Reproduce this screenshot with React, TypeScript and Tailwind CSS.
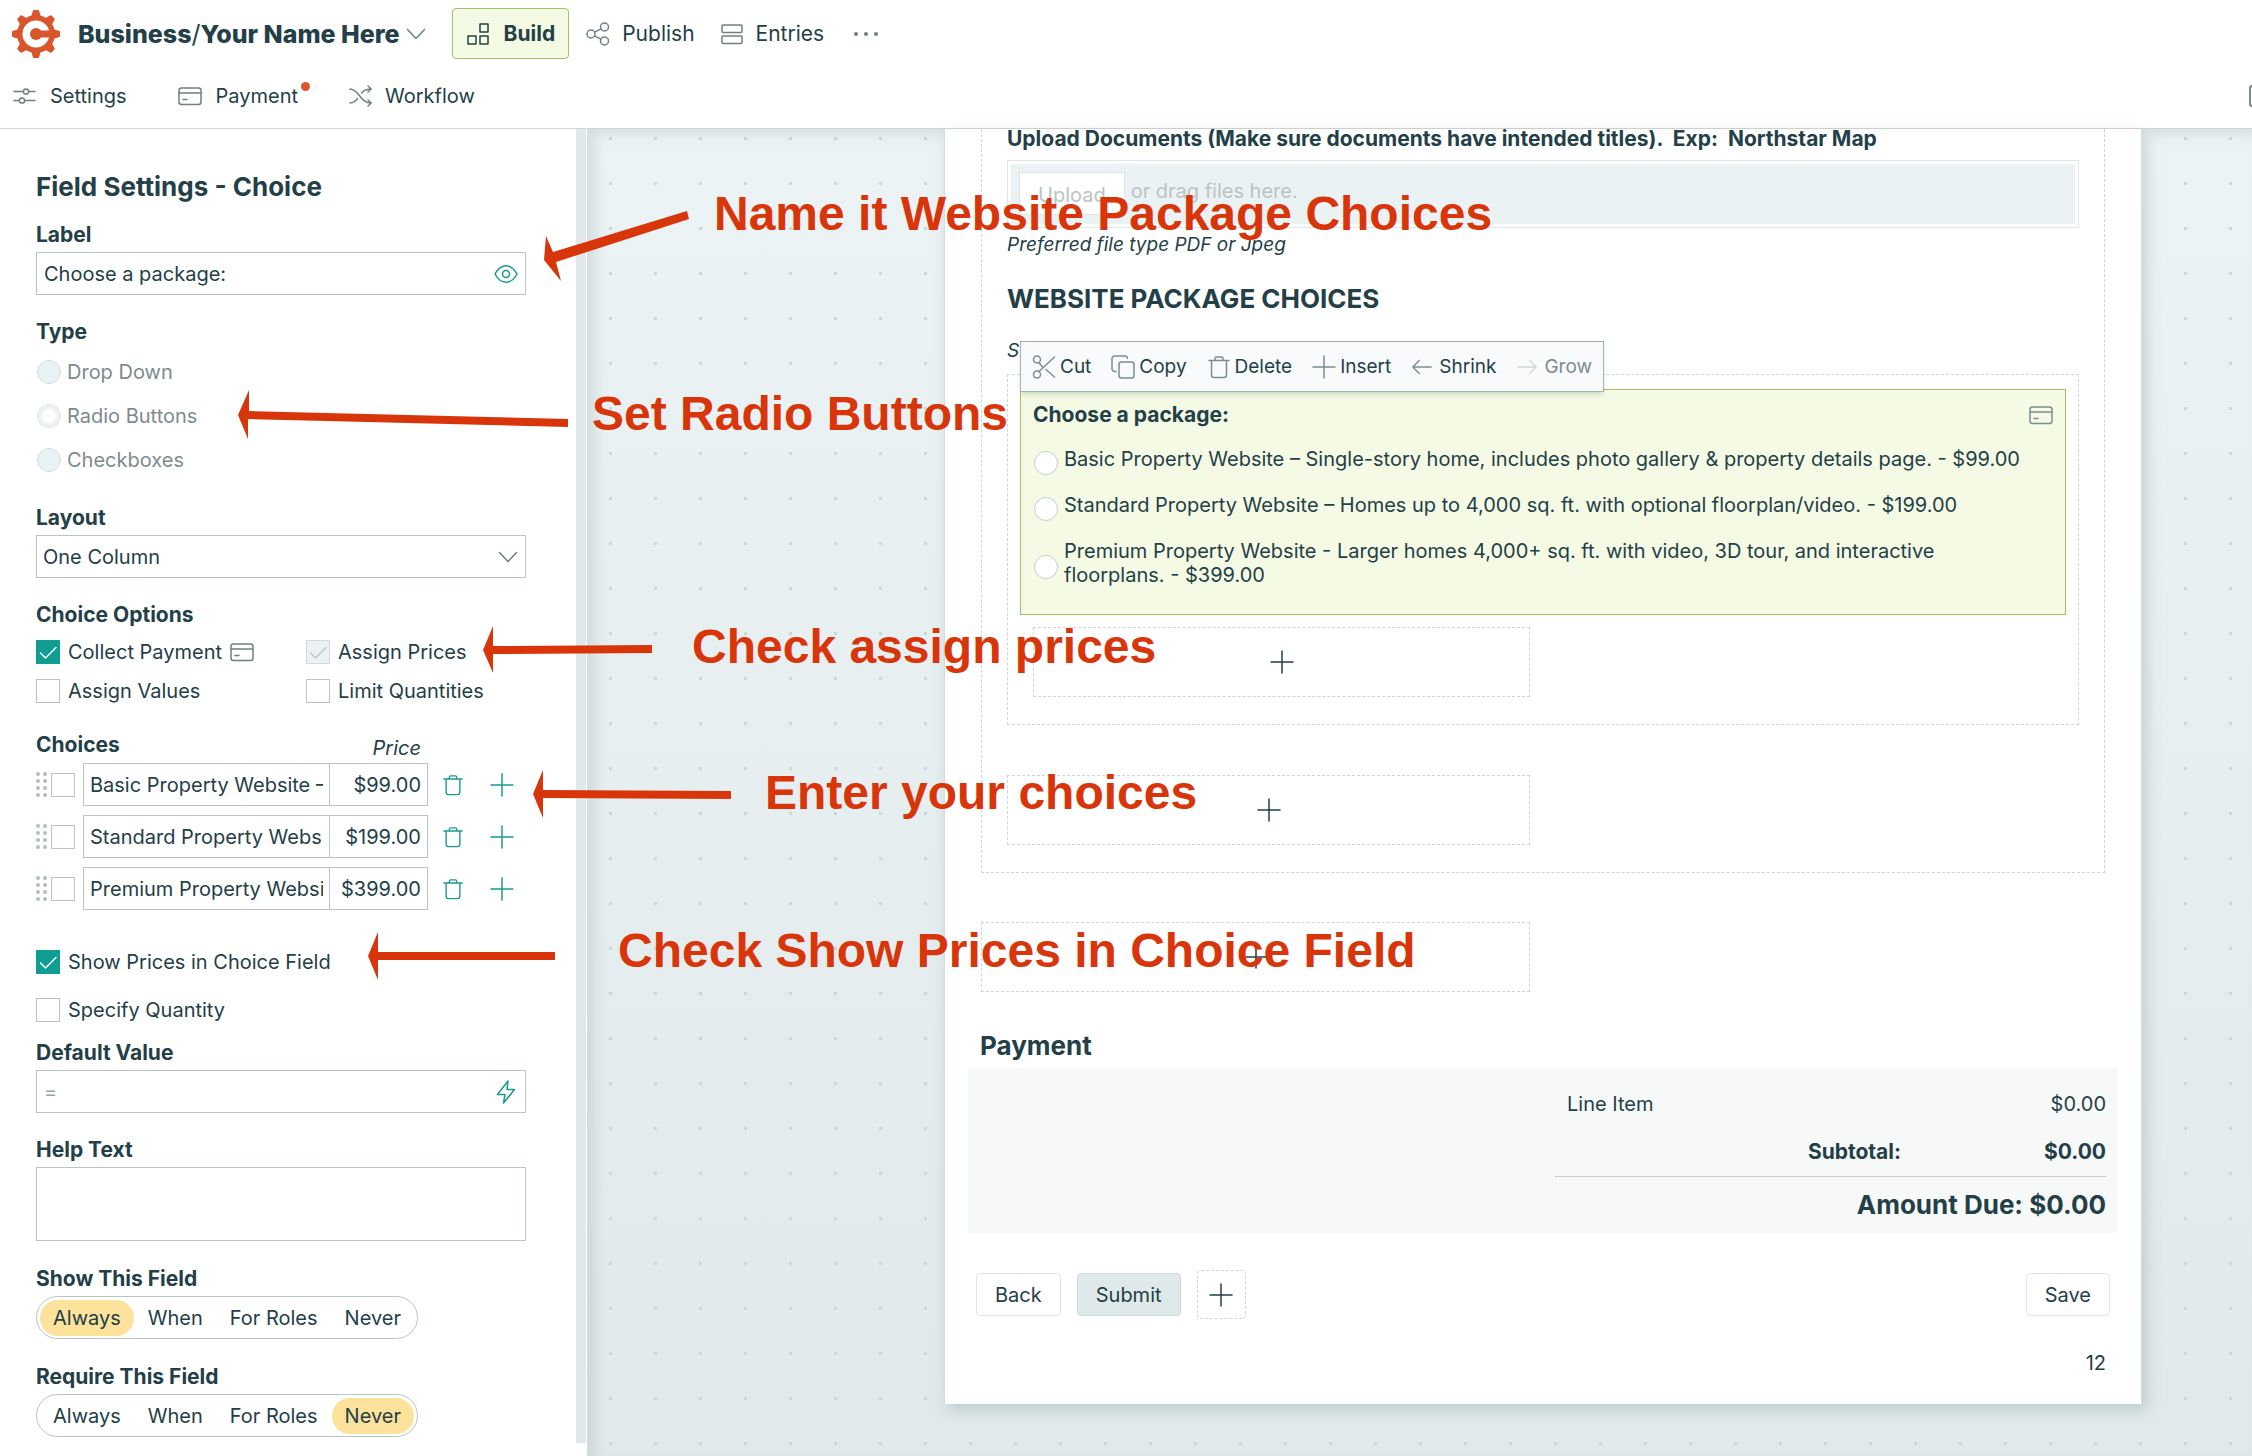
import { ReactNode } from "react";
import { clsx } from "clsx";

const choices = [
  { name: "Basic Property Website – Single-story home, includes photo gallery & property details page.", price: "$99.00" },
  { name: "Standard Property Website – Homes up to 4,000 sq. ft. with optional floorplan/video.", price: "$199.00" },
  { name: "Premium Property Website - Larger homes 4,000+ sq. ft. with video, 3D tour, and interactive floorplans.", price: "$399.00" },
];

const visibilityOptions = ["Always", "When", "For Roles", "Never"];

type IconProps = { className?: string };

function Svg({ className, box = "0 0 24 24", children }: IconProps & { box?: string; children: ReactNode }) {
  return (
    <svg
      viewBox={box}
      className={clsx("shrink-0", className)}
      fill="none"
      stroke="currentColor"
      strokeWidth="1.5"
      strokeLinecap="round"
      strokeLinejoin="round"
      aria-hidden="true"
    >
      {children}
    </svg>
  );
}

function Logo() {
  const teeth = [0, 45, 90, 135, 180, 225, 270, 315];
  return (
    <svg viewBox="0 0 48 48" className="size-12 shrink-0" aria-hidden="true">
      <g fill="#d9552b">
        {teeth.map((angle) => (
          <path key={angle} d="M18.5 9 21 0.5Q21.2 0 22 0h4q.8 0 1 .5L29.5 9Z" transform={`rotate(${angle} 24 24)`} />
        ))}
        <circle cx="24" cy="24" r="19" />
      </g>
      <circle cx="24" cy="24" r="13.5" fill="#fff" />
      <circle cx="24" cy="24" r="6" fill="#d9552b" />
      <path d="M25 20.5H38V27.500H25Z" fill="#d9552b" />
    </svg>
  );
}

const ChevronIcon = ({ className }: IconProps) => (
  <Svg className={className} box="0 0 20 12"><path d="M1.5 1.5 10 10.500 18.500 1.500" /></Svg>
);
const BuildIcon = ({ className }: IconProps) => (
  <Svg className={className}>
    <rect x="14" y="2" width="8" height="8" />
    <rect x="2" y="14" width="8" height="8" />
    <rect x="14" y="14" width="8" height="8" />
  </Svg>
);
const PublishIcon = ({ className }: IconProps) => (
  <Svg className={className}>
    <circle cx="5" cy="12" r="4" />
    <circle cx="18.500" cy="5" r="4" />
    <circle cx="18.500" cy="19" r="4" />
    <path d="M8.500 10.200 15 6.800M8.500 13.800 15 17.200" />
  </Svg>
);
const EntriesIcon = ({ className }: IconProps) => (
  <Svg className={className}>
    <rect x="2" y="3" width="20" height="7.500" rx="1" />
    <rect x="2" y="14" width="20" height="7.500" rx="1" />
  </Svg>
);
const SettingsIcon = ({ className }: IconProps) => (
  <Svg className={className}>
    <path d="M2 7.500h8.500M17.500 7.500h5.500M2 16.500h4.500M13.500 16.500h9.500" />
    <circle cx="14" cy="7.500" r="2.600" />
    <circle cx="10" cy="16.500" r="2.600" />
  </Svg>
);
const CardIcon = ({ className }: IconProps) => (
  <Svg className={className}>
    <rect x="1" y="4" width="22" height="16.500" rx="2.500" />
    <path d="M1 9h22M5 15.500h4" />
  </Svg>
);
const WorkflowIcon = ({ className }: IconProps) => (
  <Svg className={className}>
    <path d="M1 5c9 0 10 14 21 14M1 19c3.500 0 5.800-2 7.600-4.600M12.600 9C14.600 6.600 17.300 5 22 5M19 2l3.200 3L19 8M19 16l3.200 3-3.200 3" />
  </Svg>
);
const EyeIcon = ({ className }: IconProps) => (
  <Svg className={className}>
    <path d="M1 12C4 6.500 8 3.800 12 3.800S20 6.500 23 12C20 17.500 16 20.200 12 20.200S4 17.500 1 12Z" />
    <circle cx="12" cy="12" r="3.500" />
  </Svg>
);
const TrashIcon = ({ className }: IconProps) => (
  <Svg className={className}>
    <path d="M2 5.500h20M4.500 5.500V20a2.500 2.500 0 0 0 2.500 2.500h10a2.500 2.500 0 0 0 2.500-2.500V5.500M8 5.500V3.500A1.500 1.500 0 0 1 9.500 2h5A1.500 1.500 0 0 1 16 3.500v2" />
  </Svg>
);
const PlusIcon = ({ className }: IconProps) => (
  <Svg className={className}><path d="M12 1v22M1 12h22" /></Svg>
);
const BoltIcon = ({ className }: IconProps) => (
  <Svg className={className}><path d="M14 1 3.500 14.500H11L9.500 23 20.500 9.500H13Z" /></Svg>
);
const ScissorsIcon = ({ className }: IconProps) => (
  <Svg className={className}>
    <circle cx="5" cy="4.500" r="3.500" />
    <circle cx="5" cy="19.500" r="3.500" />
    <path d="M7 7.500 10.500 12M7 16.500 22.500 2M14 14.500 22.500 22" />
  </Svg>
);
const CopyIcon = ({ className }: IconProps) => (
  <Svg className={className}>
    <rect x="8" y="7" width="15" height="16" rx="2.500" />
    <path d="M5 16.500H3.500A2.500 2.500 0 0 1 1 14V3.500A2.500 2.500 0 0 1 3.500 1H14a2.500 2.500 0 0 1 2.500 2.500" />
  </Svg>
);
const LeftIcon = ({ className }: IconProps) => (
  <Svg className={className}><path d="M22 12H2M9 5l-7 7 7 7" /></Svg>
);
const RightIcon = ({ className }: IconProps) => (
  <Svg className={className}><path d="M2 12h20M15 5l7 7-7 7" /></Svg>
);

function CheckBox({ id, checked = false, disabled = false }: { id: string; checked?: boolean; disabled?: boolean }) {
  return (
    <span className="relative size-6 shrink-0">
      <input
        id={id}
        type="checkbox"
        defaultChecked={checked}
        disabled={disabled}
        className={clsx(
          "block size-6 appearance-none border",
          disabled ? "border-[#cfdadb] bg-[#ebf2f3]" : checked ? "border-[#0f9d94] bg-[#0f9d94]" : "border-[#b9c4c6] bg-white"
        )}
      />
      {checked && (
        <Svg className={clsx("pointer-events-none absolute inset-0 size-6", disabled ? "text-[#bccaca]" : "text-white")}>
          <path d="M4.500 13 9.500 18 20 7.500" />
        </Svg>
      )}
    </span>
  );
}

function CheckField(props: { id: string; label: string; checked?: boolean; disabled?: boolean; children?: ReactNode }) {
  return (
    <div className="flex items-center gap-2">
      <CheckBox id={props.id} checked={props.checked} disabled={props.disabled} />
      <label htmlFor={props.id}>{props.label}</label>
      {props.children}
    </div>
  );
}

function Pills({ name, legend, value }: { name: string; legend: string; value: string }) {
  return (
    <fieldset className="mt-[26px]">
      <legend className="mb-[5px] text-[21px] font-bold">{legend}</legend>
      <div className="inline-flex h-[43px] items-center gap-px rounded-full border border-[#b9c4c6] px-[3px]">
        {visibilityOptions.map((option) => (
          <label
            key={option}
            className={clsx("flex h-9 items-center rounded-full px-[13px]", option === value && "bg-[#fde29b]")}
          >
            <input type="radio" name={name} defaultChecked={option === value} className="sr-only" />
            {option}
          </label>
        ))}
      </div>
    </fieldset>
  );
}

function AddBox({ className }: { className?: string }) {
  return (
    <button
      type="button"
      aria-label="Add field"
      className={clsx("flex h-[70px] items-center justify-center border border-dashed border-[#cdd5d8]", className)}
    >
      <PlusIcon className="size-6" />
    </button>
  );
}

function Header() {
  return (
    <header className="border-b border-[#cfd6d8] bg-white pt-2 pb-5 pl-3">
      <div className="flex h-[51px] items-center text-[21px]">
        <Logo />
        <h1 className="ml-[18px] text-[25px] leading-8 font-extrabold whitespace-nowrap">
          Business<span className="font-normal">/</span>Your Name Here
        </h1>
        <ChevronIcon className="ml-1.5 h-3 w-5 text-[#6f8083]" />
        <nav className="ml-[26px] flex items-center">
          <a href="#build" className="flex h-[51px] items-center gap-3.5 rounded border border-[#9cc467] bg-[#f5fae4] px-[13px] font-bold">
            <BuildIcon className="size-6" />
            Build
          </a>
          <a href="#publish" className="ml-[17px] flex items-center gap-3">
            <PublishIcon className="size-6 text-[#6f8083]" />
            Publish
          </a>
          <a href="#entries" className="ml-[25px] flex items-center gap-3">
            <EntriesIcon className="size-6 text-[#6f8083]" />
            Entries
          </a>
          <button type="button" aria-label="More" className="ml-[30px] flex gap-1.5">
            <span className="size-1 rounded-full bg-[#6f8083]" />
            <span className="size-1 rounded-full bg-[#6f8083]" />
            <span className="size-1 rounded-full bg-[#6f8083]" />
          </button>
        </nav>
      </div>
      <div className="mt-[25px] flex h-6 items-center">
        <a href="#settings" className="flex items-center gap-3.5">
          <SettingsIcon className="size-6 text-[#6f8083]" />
          Settings
        </a>
        <a href="#payment" className="relative ml-[51px] flex items-center gap-3.5">
          <CardIcon className="size-6 text-[#6f8083]" />
          Payment
          <span className="absolute -top-0.5 -right-3 size-[9px] rounded-full bg-[#e0552b]" />
        </a>
        <a href="#workflow" className="ml-[51px] flex items-center gap-3">
          <WorkflowIcon className="size-6 text-[#6f8083]" />
          Workflow
        </a>
        <button
          type="button"
          aria-label="Preview"
          className="ml-auto h-[22px] w-[3px] rounded-l border-2 border-r-0 border-[#7b8d90]"
        />
      </div>
    </header>
  );
}

function Sidebar() {
  const heading = "text-[21px] font-bold";
  return (
    <aside className="flex w-[588px] shrink-0 border-r border-[#d5dcde] bg-white">
      <form className="min-w-0 flex-1 pt-[42px] pr-[50px] pb-4 pl-9">
        <h2 className="text-[26px] leading-8 font-bold">Field Settings - Choice</h2>

        <label htmlFor="label" className={clsx(heading, "mt-5 mb-[5px] block")}>Label</label>
        <div className="flex h-[43px] items-center border border-[#b9c4c6] px-[7px]">
          <input id="label" type="text" defaultValue="Choose a package:" className="min-w-0 flex-1 outline-none" />
          <EyeIcon className="size-6 text-[#1a9a8d]" />
        </div>

        <fieldset className="mt-[25px] flex flex-col gap-5 text-[#7e8b8d]">
          <legend className={clsx(heading, "mb-4 text-[#234048]")}>Type</legend>
          {["Drop Down", "Radio Buttons", "Checkboxes"].map((type) => (
            <label key={type} className="flex items-center gap-1.5">
              <input
                type="radio"
                name="type"
                disabled
                defaultChecked={type === "Radio Buttons"}
                className="ml-px size-6 appearance-none rounded-full border border-[#d3dcdd] bg-[#ebf2f3] checked:border-[#dbe3e4] checked:bg-white checked:ring-4 checked:ring-inset checked:ring-[#edf3f3]"
              />
              {type}
            </label>
          ))}
        </fieldset>

        <label htmlFor="layout" className={clsx(heading, "mt-[34px] mb-[5px] block")}>Layout</label>
        <div className="relative">
          <select id="layout" className="h-[43px] w-full appearance-none border border-[#b9c4c6] bg-white px-1.5 outline-none">
            <option>One Column</option>
          </select>
          <ChevronIcon className="pointer-events-none absolute top-4 right-2 h-3 w-5 text-[#6f8083]" />
        </div>

        <fieldset className="mt-[25px] grid grid-cols-[270px_1fr] gap-y-[15px]">
          <legend className={clsx(heading, "mb-[13px]")}>Choice Options</legend>
          <CheckField id="collect" label="Collect Payment" checked>
            <CardIcon className="size-6 text-[#6f8083]" />
          </CheckField>
          <CheckField id="prices" label="Assign Prices" checked disabled />
          <CheckField id="values" label="Assign Values" />
          <CheckField id="limit" label="Limit Quantities" />
        </fieldset>

        <div className="mt-[30px] mb-[3px] flex justify-between">
          <h3 className={heading}>Choices</h3>
          <span className="pt-[3px] pr-[105px] italic">Price</span>
        </div>
        <ul className="flex flex-col gap-[9px]">
          {choices.map((choice, index) => (
            <li key={choice.name} className="flex items-center">
              <span className="mr-1 grid grid-cols-2 gap-[3px]">
                {Array.from({ length: 8 }, (_, dot) => (
                  <span key={dot} className="size-1 rounded-full bg-[#b3bfc1]" />
                ))}
              </span>
              <input type="checkbox" aria-label={`Select choice ${index + 1}`} className="size-6 appearance-none border border-[#b9c4c6]" />
              <span className="ml-2 flex h-[43px] w-[345px] border border-[#b9c4c6]">
                <input
                  type="text"
                  aria-label={`Choice ${index + 1}`}
                  defaultValue={choice.name}
                  className="min-w-0 flex-1 border-x-[6px] border-transparent outline-none"
                />
                <input
                  type="text"
                  aria-label={`Price ${index + 1}`}
                  defaultValue={choice.price}
                  className="w-[98px] border-l border-[#b9c4c6] pr-1.5 text-right outline-none"
                />
              </span>
              <button type="button" aria-label="Delete choice" className="ml-3.5 text-[#1a9a8d]">
                <TrashIcon className="size-[22px]" />
              </button>
              <button type="button" aria-label="Add choice" className="ml-[26px] text-[#1a9a8d]">
                <PlusIcon className="size-6" />
              </button>
            </li>
          ))}
        </ul>

        <div className="mt-10 flex flex-col gap-6">
          <CheckField id="show-prices" label="Show Prices in Choice Field" checked />
          <CheckField id="quantity" label="Specify Quantity" />
        </div>

        <label htmlFor="default" className={clsx(heading, "mt-[19px] mb-[5px] block")}>Default Value</label>
        <div className="flex h-[43px] items-center border border-[#b9c4c6] px-[7px]">
          <input id="default" type="text" placeholder="=" className="min-w-0 flex-1 outline-none placeholder:text-[#8fa9a8]" />
          <BoltIcon className="size-6 text-[#1a9a8d]" />
        </div>

        <label htmlFor="help" className={clsx(heading, "mt-[25px] mb-[5px] block")}>Help Text</label>
        <textarea id="help" className="block h-[74px] w-full resize-none border border-[#b9c4c6]" />

        <Pills name="show" legend="Show This Field" value="Always" />
        <Pills name="require" legend="Require This Field" value="Never" />
      </form>
      <div className="mb-[13px] w-2.5 bg-[#dfe9ea]" />
      <div className="w-px" />
    </aside>
  );
}

function Toolbar() {
  const icon = "size-6 text-[#7b8d90]";
  return (
    <div
      role="toolbar"
      className="absolute -top-[49px] -left-px flex h-[51px] items-center gap-5 border border-[#9fb3b7] bg-[#f8fafb] px-[11px] text-[19px] whitespace-nowrap shadow-md"
    >
      <button type="button" className="flex items-center gap-1"><ScissorsIcon className={icon} />Cut</button>
      <button type="button" className="flex items-center gap-1"><CopyIcon className={icon} />Copy</button>
      <button type="button" className="flex items-center gap-1"><TrashIcon className={icon} />Delete</button>
      <button type="button" className="flex items-center gap-1"><PlusIcon className={icon} />Insert</button>
      <button type="button" className="flex items-center gap-1.5"><LeftIcon className="size-[22px] text-[#7b8d90]" />Shrink</button>
      <button type="button" disabled className="flex items-center gap-1.5 text-[#7e8b8d]">
        <RightIcon className="size-[22px] text-[#d0d8da]" />
        Grow
      </button>
    </div>
  );
}

function FormPage() {
  return (
    <article className="border-x border-[#d3dcde] bg-white px-[23px] pb-[29px] shadow-[4px_6px_14px_rgba(120,150,145,0.35)]">
      <div className="mx-[13px] border border-t-0 border-dashed border-[#cdd5d8] px-[25px] pb-[27px]">
        <p className="pt-px text-[21px] leading-[18px] font-bold whitespace-pre">
          Upload Documents (Make sure documents have intended titles).  Exp:  Northstar Map
        </p>
        <div className="mt-3 border border-[#dfe6e8] p-[3px]">
          <div className="flex h-[60px] items-start bg-[#ebf2f3] pt-2 pl-2 text-[#b9c4c5]">
            <button type="button" className="h-[43px] border border-[#dfe6e8] bg-white px-[18px] pt-0.5">Upload</button>
            <span className="mt-[7px] ml-1.5">or drag files here.</span>
          </div>
        </div>
        <p className="mt-[5px] text-[19px] italic">Preferred file type PDF or Jpeg</p>
        <h2 className="mt-[26px] text-[26px] leading-8 font-bold">WEBSITE PACKAGE CHOICES</h2>
        <p className="mt-6 text-[19px] italic">S</p>

        <section className="mt-[11px] border border-dashed border-[#cdd5d8] px-3 pt-3.5 pb-[27px]">
          <fieldset className="relative border border-[#9cc467] bg-[#f5fae4] px-3 pt-[13px] pb-[27px]">
            <Toolbar />
            <div className="flex justify-between">
              <h3 className="text-[21px] font-bold">Choose a package:</h3>
              <CardIcon className="size-6 text-[#7b8d90]" />
            </div>
            <div className="mt-5 flex flex-col gap-[22px] pr-6">
              {choices.map((choice) => (
                <label key={choice.name} className="flex items-center gap-1.5">
                  <input type="radio" name="package" className="mt-1 -mb-1 ml-px size-6 shrink-0 appearance-none rounded-full border border-[#c3cdcf] bg-white" />
                  {choice.name} - {choice.price}
                </label>
              ))}
            </div>
          </fieldset>
          <AddBox className="mt-3 ml-[13px] w-[497px]" />
        </section>

        <AddBox className="mt-[50px] w-[523px]" />
      </div>

      <AddBox className="mt-[49px] ml-[13px] w-[549px]" />

      <h2 className="mt-[38px] ml-3 text-[26px] leading-8 font-bold">Payment</h2>
      <div className="mt-1.5 flex justify-end bg-[#f7f9f9] pt-6 pr-3 pb-3">
        <table className="w-[551px]">
          <tbody>
            <tr>
              <td className="pb-6 pl-3">Line Item</td>
              <td />
              <td className="w-[205px] pb-6 text-right">$0.00</td>
            </tr>
            <tr className="text-[21px]">
              <td />
              <th scope="row" className="pb-3 text-right font-bold">Subtotal:</th>
              <td className="pb-3 text-right font-bold">$0.00</td>
            </tr>
          </tbody>
          <tfoot>
            <tr className="border-t border-[#c8d0d3]">
              <td colSpan={3} className="pt-3 text-right text-[26px] leading-8 font-bold">Amount Due: $0.00</td>
            </tr>
          </tfoot>
        </table>
      </div>

      <div className="mt-[37px] flex items-center gap-4 px-2">
        <button type="button" className="h-[43px] rounded border border-[#dfe6e8] px-[18px]">Back</button>
        <button type="submit" className="h-[43px] rounded border border-[#cbdadb] bg-[#dfe9ea] px-[18px]">Submit</button>
        <button type="button" aria-label="Add button" className="flex size-[49px] items-center justify-center rounded border border-dashed border-[#cdd5d8]">
          <PlusIcon className="size-6" />
        </button>
        <button type="button" className="ml-auto h-[43px] rounded border border-[#dfe6e8] px-[18px]">Save</button>
      </div>
      <p className="mt-8 pr-3 text-right">12</p>
    </article>
  );
}

// Callouts float over the builder, they are not part of its layout
function Annotations() {
  const text = "absolute font-['Liberation_Sans',sans-serif] text-[48px] leading-[54px] font-bold whitespace-nowrap";
  return (
    <div className="pointer-events-none absolute inset-0 overflow-hidden text-[#d9350b]">
      <svg className="absolute inset-0 size-full" fill="currentColor" stroke="none" aria-hidden="true">
        <path d="M544 260 546 236 553 252 687 211 689 219 556 262 561 281Z" />
        <path d="M238 415 249 390V411L568 419V427L248 419V439Z" />
        <path d="M483 650 493 626V646L652 645V653L493 654V673Z" />
        <path d="M533 794 543 770V790L731 791V799L543 798V818Z" />
        <path d="M368 956 378 932V952H555V960H378V980Z" />
      </svg>
      <p className={clsx(text, "top-[187px] left-[714px]")}>Name it Website Package Choices</p>
      <p className={clsx(text, "top-[387px] left-[592px]")}>Set Radio Buttons</p>
      <p className={clsx(text, "top-[620px] left-[692px]")}>Check assign prices</p>
      <p className={clsx(text, "top-[766px] left-[765px]")}>Enter your choices</p>
      <p className={clsx(text, "top-[924px] left-[618px]")}>Check Show Prices in Choice Field</p>
    </div>
  );
}

export default function App() {
  return (
    <div className="relative flex min-h-screen flex-col font-['Inter',sans-serif] text-[20px] leading-6 text-[#234048]">
      <Header />
      <div className="flex flex-1">
        <Sidebar />
        <main className="flex-1 bg-[radial-gradient(circle,#ccd7d9_1.5px,transparent_2px),linear-gradient(#ecf3f4,#e0e9eb)] bg-[length:45px_45px,100%_100%] bg-[position:0_-13px,0_0] pr-[110px] pb-[52px] pl-[356px] shadow-[inset_8px_6px_12px_rgba(130,150,155,0.2)]">
          <FormPage />
        </main>
      </div>
      <Annotations />
    </div>
  );
}
